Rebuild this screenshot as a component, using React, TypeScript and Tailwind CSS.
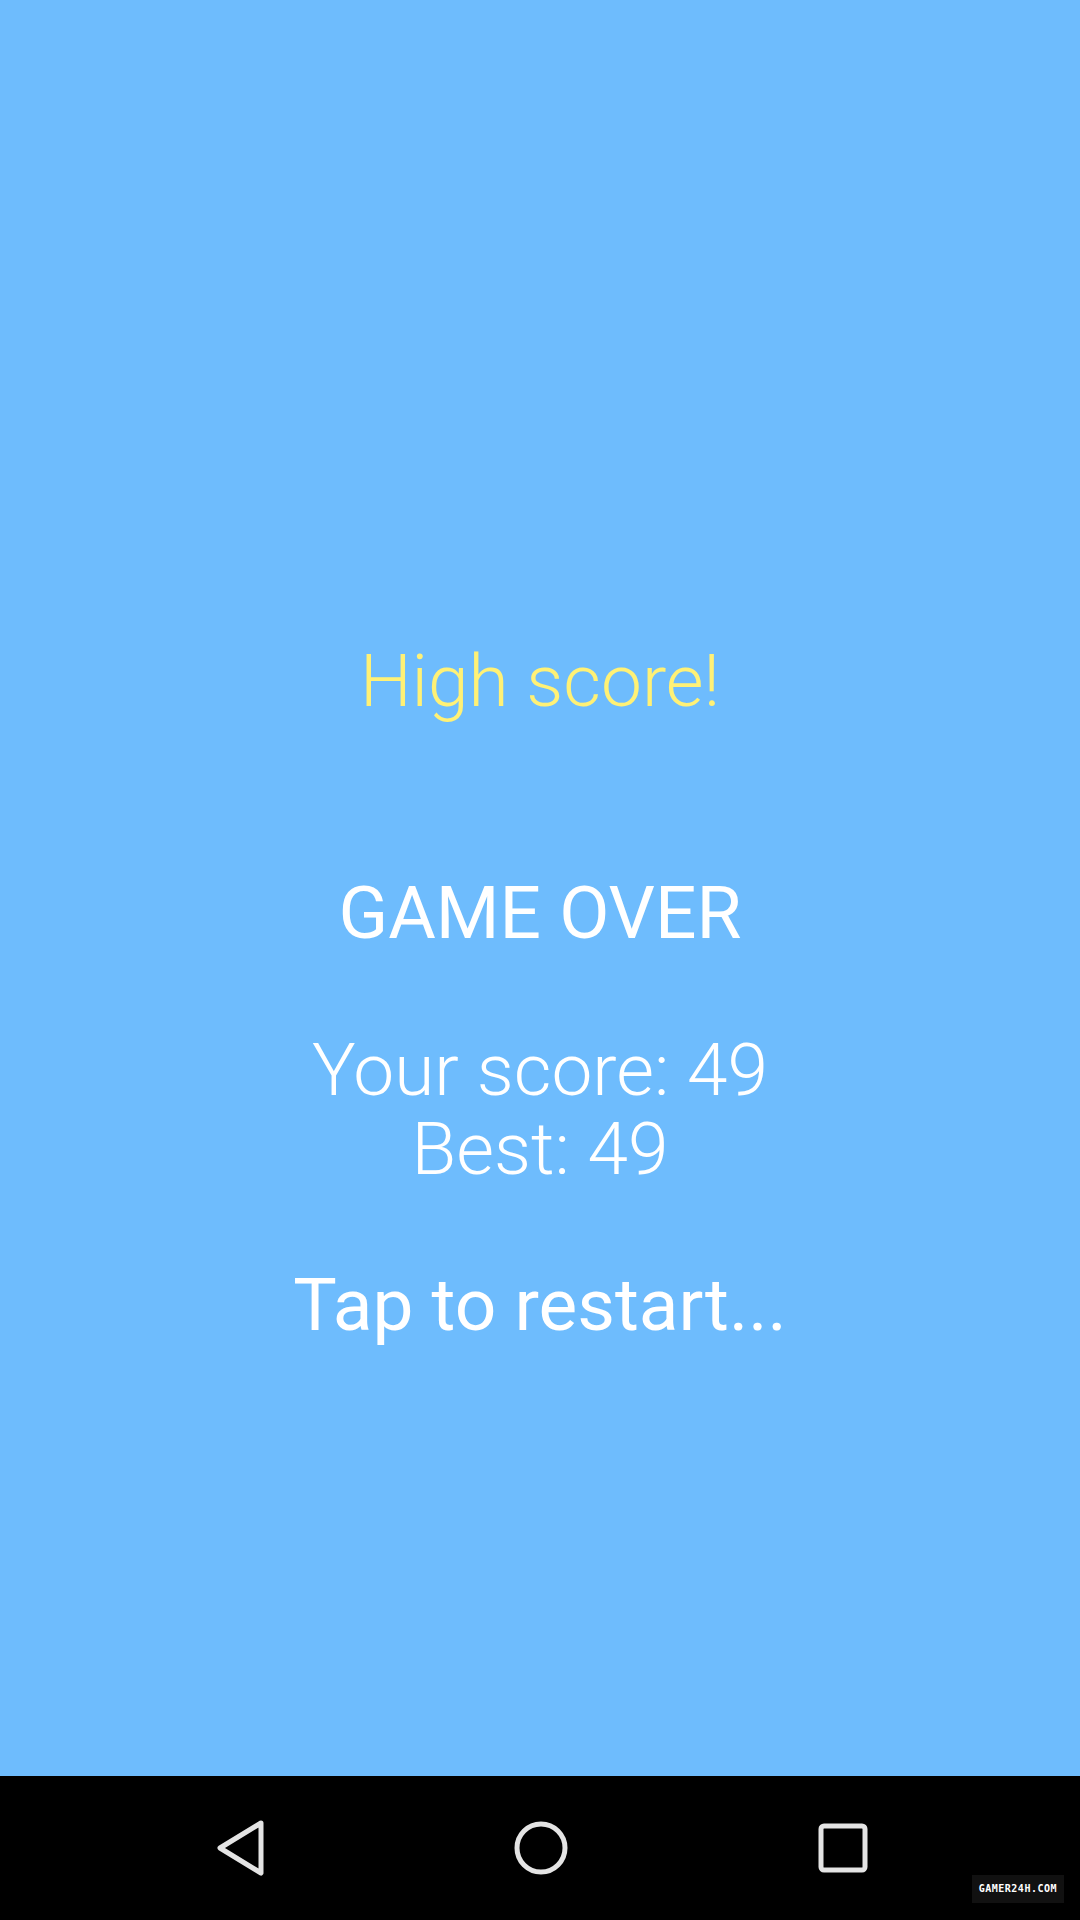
import React from "react";

/** 结束画面的文字行 */
function Line({ children, className }: { children: React.ReactNode; className?: string }) {
  return <div className={`text-[73px] leading-[79px] whitespace-nowrap ${className ?? ""}`}>{children}</div>;
}

/** 底部导航栏 */
function NavBar() {
  return (
    <div className="relative h-[144px] bg-black flex items-center justify-center">
      <div className="flex items-center gap-[250px]">
        {/* 返回 */}
        <svg width="48" height="56" viewBox="0 0 48 56" className="ml-[4px]">
          <path d="M45 3 L4 28 L45 53 Z" fill="none" stroke="#e4e4e4" strokeWidth="5" strokeLinejoin="round" />
        </svg>
        {/* 主页 */}
        <svg width="54" height="54" viewBox="0 0 54 54">
          <circle cx="27" cy="27" r="24" fill="none" stroke="#e4e4e4" strokeWidth="5" />
        </svg>
        {/* 最近任务 */}
        <svg width="50" height="50" viewBox="0 0 50 50">
          <rect x="3" y="3" width="44" height="44" rx="3" fill="none" stroke="#e4e4e4" strokeWidth="5" />
        </svg>
      </div>
      <div className="absolute right-[16px] bottom-[17px] bg-[#111111] px-[7px] py-[6px] text-white text-[10px] leading-[16px] font-bold tracking-[0.5px] font-['DejaVu_Sans_Mono',monospace]">
        GAMER24H.COM
      </div>
    </div>
  );
}

export default function App() {
  return (
    <div className="w-[1080px] h-[1920px] flex flex-col font-['Roboto',sans-serif]">
      <div className="h-[1776px] bg-[#6ebcfd] flex flex-col items-center pt-[642px] text-white">
        <Line className="font-light text-[#fff176]">High score!</Line>
        <Line className="mt-[153px] font-normal">GAME OVER</Line>
        <Line className="mt-[78px] font-light">Your score: 49</Line>
        <Line className="font-light">Best: 49</Line>
        <Line className="mt-[77px] font-normal">Tap to restart...</Line>
      </div>
      <NavBar />
    </div>
  );
}
